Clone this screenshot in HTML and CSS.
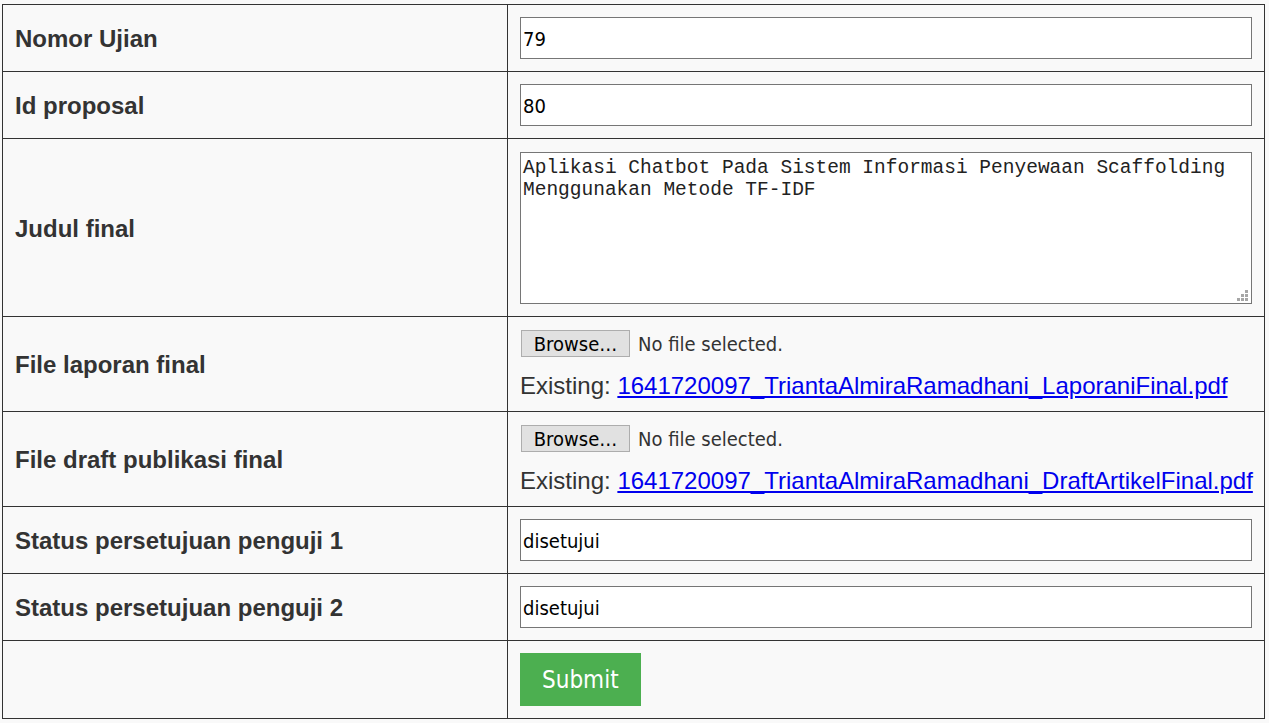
FILE: index.html
```html
<!DOCTYPE html>
<html lang="id">
<head>
<meta charset="utf-8">
<title>Edit Ujian Final</title>
<link rel="stylesheet" href="styles.css">
</head>
<body>
<form class="exam-form" action="#" method="post">
  <table class="form-table">
    <colgroup>
      <col class="col-label">
      <col class="col-field">
    </colgroup>
    <tbody>
      <tr>
        <td class="label-cell">Nomor Ujian</td>
        <td class="field-cell"><input class="text-input" type="text" value="79"></td>
      </tr>
      <tr>
        <td class="label-cell">Id proposal</td>
        <td class="field-cell"><input class="text-input" type="text" value="80"></td>
      </tr>
      <tr>
        <td class="label-cell">Judul final</td>
        <td class="field-cell field-cell--area">
          <div class="area-wrap">
            <textarea class="text-area">Aplikasi Chatbot Pada Sistem Informasi Penyewaan Scaffolding Menggunakan Metode TF-IDF</textarea>
            <svg class="grip" width="11" height="11" viewBox="0 0 11 11" aria-hidden="true">
              <rect x="8" y="0" width="3" height="3"/>
              <rect x="4" y="4" width="3" height="3"/>
              <rect x="8" y="4" width="3" height="3"/>
              <rect x="0" y="8" width="3" height="3"/>
              <rect x="4" y="8" width="3" height="3"/>
              <rect x="8" y="8" width="3" height="3"/>
            </svg>
          </div>
        </td>
      </tr>
      <tr>
        <td class="label-cell">File laporan final</td>
        <td class="field-cell field-cell--file">
          <div class="file-pick">
            <span class="browse-btn">Browse…</span>
            <span class="file-status">No file selected.</span>
          </div>
          <div class="existing">Existing: <a class="file-link" href="#">1641720097_TriantaAlmiraRamadhani_LaporaniFinal.pdf</a></div>
        </td>
      </tr>
      <tr>
        <td class="label-cell">File draft publikasi final</td>
        <td class="field-cell field-cell--file">
          <div class="file-pick">
            <span class="browse-btn">Browse…</span>
            <span class="file-status">No file selected.</span>
          </div>
          <div class="existing">Existing: <a class="file-link" href="#">1641720097_TriantaAlmiraRamadhani_DraftArtikelFinal.pdf</a></div>
        </td>
      </tr>
      <tr>
        <td class="label-cell">Status persetujuan penguji 1</td>
        <td class="field-cell"><input class="text-input" type="text" value="disetujui"></td>
      </tr>
      <tr>
        <td class="label-cell">Status persetujuan penguji 2</td>
        <td class="field-cell"><input class="text-input" type="text" value="disetujui"></td>
      </tr>
      <tr>
        <td class="label-cell"></td>
        <td class="field-cell"><button class="submit-btn" type="submit">Submit</button></td>
      </tr>
    </tbody>
  </table>
</form>
</body>
</html>
```
FILE: styles.css
```css
html, body {
  margin: 0;
  padding: 0;
  background: #f9f9f9;
}

body {
  font-family: "Liberation Sans", Arial, sans-serif;
  color: #333;
}

.exam-form {
  margin: 0;
  padding: 4px 0 0 2px;
}

.form-table {
  border-collapse: collapse;
  table-layout: fixed;
  width: 1263px;
  background: #f9f9f9;
}

.col-label {
  width: 505px;
}

.form-table td {
  border: 1px solid #333;
  padding: 12px;
  vertical-align: middle;
}

.label-cell {
  font-size: 24px;
  font-weight: bold;
  color: #333;
}

.form-table td.label-cell {
  padding-top: 14px;
}

.text-input {
  display: block;
  box-sizing: border-box;
  width: 100%;
  height: 42px;
  margin: 0;
  padding: 1px 2px 0;
  border: 1px solid #767676;
  border-radius: 0;
  background: #fff;
  color: #000;
  font-family: "DejaVu Sans Condensed", "DejaVu Sans", sans-serif;
  font-stretch: condensed;
  font-size: 20px;
  outline: none;
}

.form-table td.field-cell--area {
  padding-top: 13px;
  padding-bottom: 12px;
}

.area-wrap {
  position: relative;
}

.text-area {
  display: block;
  box-sizing: border-box;
  width: 100%;
  height: 152px;
  margin: 0;
  padding: 4px 2px 2px;
  border: 1px solid #767676;
  border-radius: 0;
  background: #fff;
  color: #222;
  font-family: "Courier New", "Nimbus Mono PS", "Nimbus Mono L", FreeMono, "Liberation Mono", monospace;
  font-size: 19.5px;
  line-height: 22px;
  resize: none;
  outline: none;
}

.grip {
  position: absolute;
  right: 4px;
  bottom: 3px;
  fill: #a6a6a6;
}

.file-pick {
  display: flex;
  align-items: center;
  gap: 8px;
  height: 29px;
  font-family: "DejaVu Sans Condensed", "DejaVu Sans", sans-serif;
  font-stretch: condensed;
  font-size: 20px;
}

.browse-btn {
  box-sizing: border-box;
  display: flex;
  align-items: center;
  justify-content: center;
  width: 109px;
  height: 27px;
  margin-left: 1px;
  padding-top: 1px;
  border: 1px solid #adadad;
  background: #e1e1e1;
  color: #000;
}

.file-status {
  color: #333;
  padding-top: 1px;
}

.existing {
  margin-top: 15px;
  font-size: 24px;
  line-height: 26px;
  color: #333;
  white-space: nowrap;
}

.file-link {
  color: #00e;
  text-decoration: underline;
}

.submit-btn {
  display: block;
  height: 53px;
  margin: 0;
  padding: 0 22px;
  border: none;
  border-radius: 0;
  background: #4caf50;
  color: #fff;
  font-family: "DejaVu Sans Condensed", "DejaVu Sans", sans-serif;
  font-stretch: condensed;
  font-size: 24px;
  cursor: pointer;
}
```
